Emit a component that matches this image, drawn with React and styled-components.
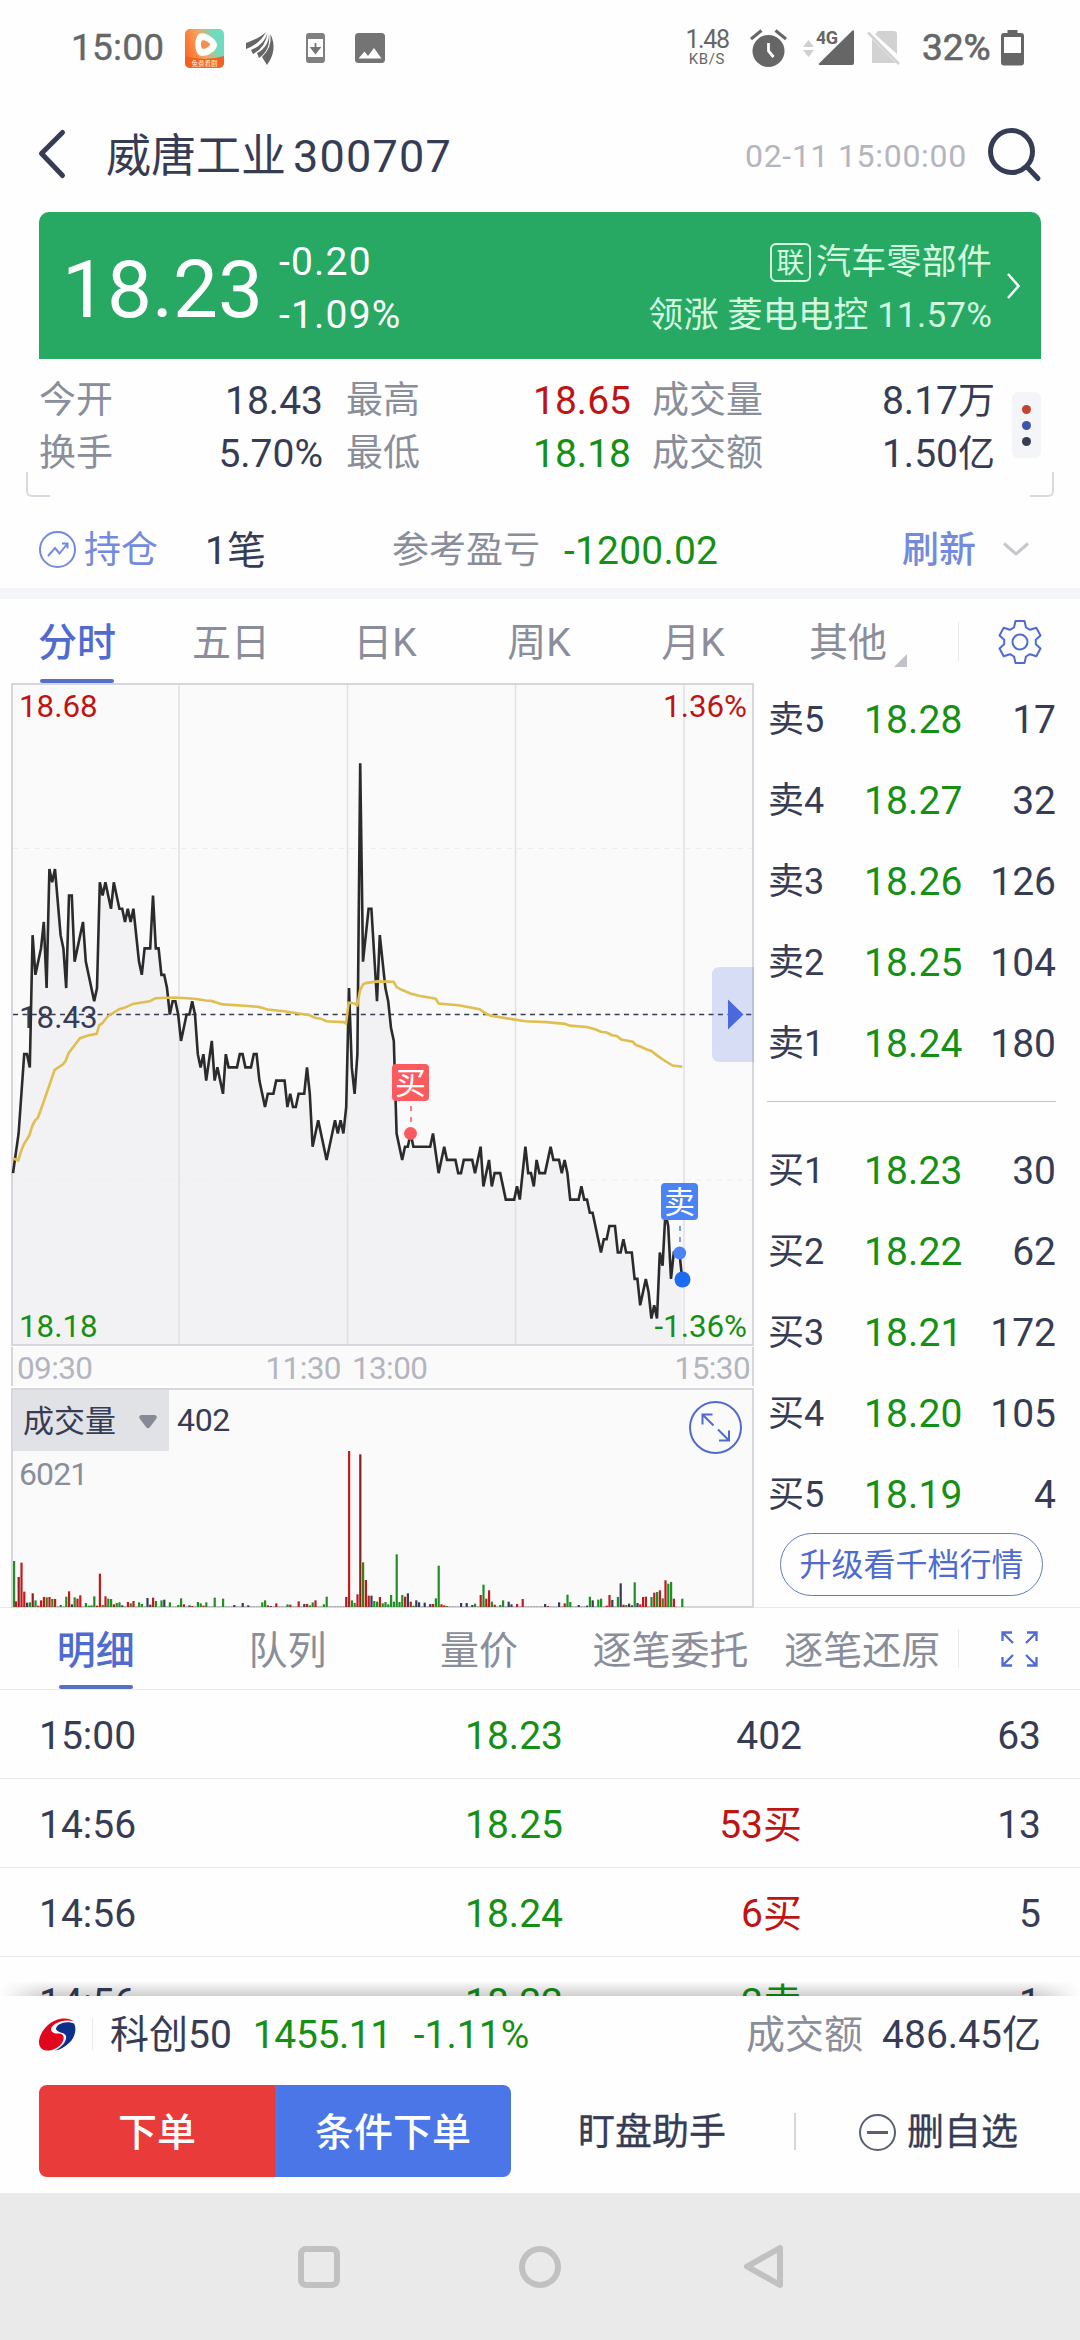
import React from 'react';
import styled, { createGlobalStyle } from 'styled-components';

const ink = '#363c54';
const gray = '#8a8e9b';
const pale = '#b3b5bf';
const blue = '#4f6bcf';
const softBlue = '#738bdc';
const red = '#c01414';
const green = '#159014';
const border = '#d6d7dc';
const hair = '#e8e9ec';
const tones = { ink, gray, red, green };

const GlobalStyle = createGlobalStyle`
    *{
        box-sizing: border-box;
    }
    body{
        margin: 0;
        background: #fefefe;
        color: ${ink};
        font-family: Roboto, "Noto Sans CJK SC", sans-serif;
        line-height: 1.2;
    }
    svg{
        display: block;
        flex: none;
        overflow: visible;
    }
`;

const Screen = styled.div`
    width: 1080px;
    height: 2340px;
    display: flex;
    flex-direction: column;
    overflow: hidden;
    white-space: nowrap;
`;

const StatusBar = styled.div`
    height: 96px;
    padding: 0 56px 0 71px;
    display: flex;
    align-items: center;
    color: #666;
`;

const StatusIcon = styled.svg`
    margin-right: ${p => p.$gap}px;
`;

const Clock = styled.span`
    width: 114px;
    font-size: 37px;
    letter-spacing: .2px;
    -webkit-text-stroke: .4px #666;
`;

const Speed = styled.div`
    width: 44px;
    margin-left: auto;
    margin-right: 21px;
    padding-bottom: 2px;
    text-align: center;
    font-size: 25px;
    line-height: 24px;
    letter-spacing: -1.4px;
    small{
        display: block;
        font-size: 15px;
        line-height: 14px;
        letter-spacing: .6px;
    }
`;

const Battery = styled.span`
    width: 79px;
    font-size: 37px;
    -webkit-text-stroke: .7px #666;
`;

const Header = styled.div`
    height: 116px;
    padding: 0 39px;
    display: flex;
    align-items: center;
`;

const Title = styled.h1`
    width: 639px;
    margin: 0 0 0 41px;
    padding-top: 6px;
    font-size: 45px;
    font-weight: 400;
    span{
        margin-left: 7px;
        letter-spacing: 1.2px;
    }
`;

const Stamp = styled.span`
    width: 243px;
    padding-top: 4px;
    font-size: 32px;
    letter-spacing: .7px;
    color: ${pale};
`;

const QuoteCard = styled.div`
    height: 147px;
    margin: 0 39px;
    padding: 0 21px 0 23px;
    display: flex;
    align-items: center;
    background: #27a963;
    border-radius: 10px 10px 0 0;
    color: #fff;
`;

const BigPrice = styled.div`
    width: 217px;
    padding-top: 9px;
    font-size: 80px;
`;

const Lines = styled.div`
    padding-top: 6px;
    display: flex;
    flex-direction: column;
    font-size: ${p => p.$size}px;
    line-height: 53px;
    letter-spacing: ${p => p.$spacing || 0}px;
    color: ${p => p.$color || 'inherit'};
    align-items: ${p => (p.$end ? 'flex-end' : 'flex-start')};
    margin-left: ${p => (p.$end ? 'auto' : 0)};
    margin-right: ${p => (p.$end ? 15 : 0)}px;
    > div{
        display: flex;
        align-items: center;
    }
`;

const LinkBadge = styled.span`
    width: 41px;
    height: 39px;
    margin-right: 5px;
    border: 2px solid #d3fbe0;
    border-radius: 6px;
    font-size: 28px;
    line-height: 37px;
    letter-spacing: 0;
    text-align: center;
`;

const Stats = styled.div`
    height: 137px;
    padding: 16px 26px 0 39px;
    display: flex;
    position: relative;
`;

const StatPair = styled.div`
    width: ${p => p.$width}px;
    margin-right: ${p => p.$gap}px;
    display: grid;
    grid-template-columns: auto 1fr;
    grid-auto-rows: 53px;
    align-items: center;
`;

const Label = styled.span`
    font-size: 37px;
    color: ${gray};
`;

const Value = styled.span`
    font-size: 39px;
    text-align: right;
    color: ${p => tones[p.$tone || 'ink']};
    small{
        font-size: 37px;
    }
`;

const More = styled.div`
    width: 29px;
    height: 66px;
    margin-top: 17px;
    display: flex;
    flex-direction: column;
    align-items: center;
    justify-content: center;
    gap: 7px;
    background: #f4f5f8;
    border-radius: 6px;
`;

const Dot = styled.i`
    width: 9px;
    height: 9px;
    border-radius: 50%;
    background: ${p => p.$color};
`;

/* corner brackets that hang over the edge of the stats block */
const Corner = styled.i`
    position: absolute;
    top: 113px;
    ${p => p.$side}: 26px;
    width: 24px;
    height: 25px;
    border: solid #d9dadf;
    border-width: ${p => (p.$side === 'left' ? '0 0 2px 2px' : '0 2px 2px 0')};
    border-radius: ${p => (p.$side === 'left' ? '0 0 0 6px' : '0 0 6px 0')};
`;

const Holding = styled.div`
    height: 92px;
    padding: 14px 39px 0;
    display: flex;
    align-items: center;
`;

const HoldText = styled.span`
    width: ${p => p.$width}px;
    margin-left: ${p => p.$left || 0}px;
    padding-top: 4px;
    font-size: ${p => p.$size || 37}px;
    font-weight: ${p => p.$weight || 400};
    letter-spacing: ${p => p.$spacing || 0}px;
    color: ${p => p.$color || ink};
`;

const Band = styled.div`
    flex: none;
    height: 11px;
    background: #f5f6f9;
`;

const Tabs = styled.div`
    flex: none;
    height: ${p => p.$height}px;
    display: flex;
    align-items: center;
    border-bottom: ${p => (p.$line ? `1px solid ${hair}` : 'none')};
`;

const Tab = styled.div`
    width: ${p => p.$width}px;
    height: 100%;
    padding-top: ${p => p.$drop}px;
    display: flex;
    justify-content: center;
    align-items: center;
    position: relative;
    font-size: 39px;
    font-weight: ${p => (p.$active ? 500 : 400)};
    color: ${p => (p.$active ? blue : gray)};
    &::after{
        content: "";
        display: ${p => (p.$active ? 'block' : 'none')};
        position: absolute;
        bottom: 0;
        width: 74px;
        height: 4px;
        border-radius: 2px;
        background: #5870c4;
    }
`;

const MoreMark = styled.i`
    position: absolute;
    right: 19px;
    bottom: 16px;
    width: 13px;
    height: 13px;
    background: #c2c3c8;
    clip-path: polygon(100% 0, 100% 100%, 0 100%);
`;

const Rule = styled.i`
    width: ${p => p.$width || 1}px;
    height: ${p => p.$height}px;
    margin: 0 ${p => p.$right || 0}px 0 ${p => p.$left || 0}px;
    background: ${p => p.$color || hair};
`;

const Market = styled.div`
    flex: none;
    height: 925px;
    display: flex;
    border-bottom: 1px solid ${hair};
`;

const Charts = styled.div`
    width: 743px;
    margin-left: 11px;
    svg text{
        font-family: Roboto, "Noto Sans CJK SC", sans-serif;
    }
`;

const PriceBox = styled.div`
    height: 663px;
    background: #fafafa;
`;

const TimeAxis = styled.div`
    height: 39px;
    margin: 1px 0 2px;
    padding: 5px 2px 0 4px;
    display: flex;
    align-items: center;
    border: solid ${border};
    border-width: 0 2px;
    background: #fafafa;
    font-size: 31.5px;
    letter-spacing: -.6px;
    color: ${pale};
    span:nth-child(2){
        margin-left: 173px;
        margin-right: 11px;
    }
    span:last-child{
        margin-left: auto;
    }
`;

const VolumeBox = styled.div`
    height: 220px;
    border: 2px solid ${border};
    background: #fafafa;
    position: relative;
`;

const VolumeHead = styled.div`
    height: 61px;
    display: flex;
    align-items: center;
    font-size: 32px;
    letter-spacing: -.3px;
`;

const Indicator = styled.div`
    width: 156px;
    height: 61px;
    margin-right: 8px;
    padding: 2px 12px 0 10px;
    display: flex;
    align-items: center;
    justify-content: space-between;
    background: #e1e2e6;
    font-size: 31px;
    letter-spacing: 0;
`;

const VolumeMax = styled.div`
    padding-left: 6px;
    font-size: 32px;
    line-height: 46px;
    letter-spacing: -.9px;
    color: ${gray};
`;

const Zoom = styled.div`
    position: absolute;
    top: 11px;
    right: 10px;
`;

const Bars = styled.div`
    position: absolute;
    left: 0;
    bottom: -1px;
`;

const Book = styled.div`
    width: 289px;
    margin: -3px 0 0 13px;
`;

const Level = styled.div`
    height: 81px;
    display: grid;
    grid-template-columns: 97px 97px 1fr;
    align-items: center;
    font-size: 39px;
    span:first-child{
        padding-left: 1px;
        font-size: 36px;
    }
    span:nth-child(2){
        color: ${green};
        letter-spacing: .1px;
    }
    span:last-child{
        text-align: right;
    }
`;

const BookRule = styled.div`
    height: 1px;
    margin: 16px 0 29px;
    background: #c3c4c9;
`;

const Upgrade = styled.div`
    width: 263px;
    height: 63px;
    margin: -3px 0 0 13px;
    border: 1px solid #5f7cc0;
    border-radius: 32px;
    font-size: 32px;
    line-height: 63px;
    text-align: center;
    color: ${blue};
`;

const Trades = styled.div`
    flex: none;
    height: 306px;
    overflow: hidden;
    position: relative;
    &::after{
        content: "";
        position: absolute;
        left: 0;
        right: 0;
        bottom: 0;
        height: 14px;
        background: linear-gradient(rgba(0, 0, 0, .02), rgba(0, 0, 0, .18));
        mask-image: linear-gradient(90deg, transparent, #000 45px, #000 1035px, transparent);
    }
`;

const Trade = styled.div`
    height: 89px;
    padding: 5px 39px 0;
    display: grid;
    grid-template-columns: 225px 299px 239px 239px;
    align-items: center;
    border-bottom: 1px solid ${hair};
    font-size: 39px;
    span{
        text-align: right;
    }
    span:first-child{
        text-align: left;
    }
    span:nth-child(2){
        color: ${green};
    }
    span:nth-child(3){
        color: ${p => tones[p.$tone]};
    }
`;

const IndexRow = styled.div`
    height: 76px;
    padding: 0 39px;
    display: flex;
    align-items: center;
    font-size: 39px;
`;

const IndexText = styled.span`
    margin-left: ${p => p.$left};
    padding-top: 2px;
    color: ${p => tones[p.$tone || 'ink']};
    letter-spacing: ${p => p.$spacing || 0}px;
`;

const Actions = styled.div`
    height: 92px;
    margin: 13px 39px 16px;
    display: flex;
    align-items: center;
    font-size: 37px;
    > svg{
        margin-top: 3px;
    }
`;

const OrderButton = styled.div`
    width: 236px;
    height: 92px;
    background: ${p => p.$bg};
    border-radius: ${p => p.$radius};
    color: #fff;
    font-size: 39px;
    font-weight: 500;
    line-height: 96px;
    text-align: center;
`;

const Action = styled.span`
    margin-left: ${p => p.$left}px;
    padding-top: 5px;
    -webkit-text-stroke: .3px ${ink};
`;

const NavBar = styled.div`
    flex: 1;
    padding: 0 297px 0 298px;
    display: flex;
    align-items: center;
    background: #eaeaea;
    svg:nth-child(2){
        margin: 0 183px 0 179px;
    }
`;

const STEP = 2.8;
const TICK = 13.22;

// [minute of the session, distance from the previous close in cents]
const PRICES = [
    [0, -12], [2, -9], [4, -3], [5, -3], [6, -4], [7, 6], [8, 3], [10, 5], [11, 7], [12, 2], [13, 11], [14, 10],
    [15, 11], [17, 6], [18, 5], [19, 2], [20, 9], [21, 9], [22, 4], [25, 7], [26, 4], [29, 1], [30, 2], [31, 10],
    [32, 9], [33, 10], [35, 8], [36, 10], [38, 8], [39, 8], [40, 7], [41, 8], [42, 7], [43, 8], [45, 4], [46, 3],
    [47, 5], [49, 5], [50, 9], [51, 5], [52, 5], [53, 3], [54, 3], [55, 2], [56, 0], [57, 1], [58, 1], [59, 0],
    [60, -2], [62, 0], [63, 0], [64, 1], [65, 0], [66, -3], [67, -4], [68, -3], [69, -5], [71, -2], [72, -5],
    [73, -4], [75, -6], [76, -3], [77, -4], [80, -4], [81, -3], [82, -3], [83, -4], [85, -4], [86, -3], [87, -3],
    [88, -5], [90, -7], [91, -6], [93, -6], [94, -5], [97, -5], [98, -7], [99, -6], [100, -7], [101, -7],
    [102, -6], [104, -6], [105, -4], [106, -6], [107, -10], [109, -8], [112, -11], [115, -8], [116, -9],
    [117, -8], [118, -9], [119, -7], [120, 2], [121, -4], [122, -6], [123, -3], [124, 19], [125, 4], [127, 8],
    [128, 8], [130, 1], [131, 6], [133, 2], [134, 1], [135, -1], [136, -2], [137, -9], [139, -11], [140, -10],
    [141, -10], [142, -9], [143, -10], [149, -10], [150, -9], [152, -12], [154, -10], [155, -11], [158, -11],
    [159, -12], [160, -12], [161, -11], [164, -11], [165, -12], [167, -10], [168, -13], [170, -11], [171, -13],
    [172, -12], [174, -12], [176, -14], [179, -14], [180, -13], [181, -14], [183, -10], [184, -12], [185, -12],
    [186, -13], [187, -11], [188, -12], [190, -12], [192, -10], [193, -11], [195, -11], [196, -12], [197, -11],
    [198, -12], [199, -14], [202, -14], [203, -13], [204, -14], [205, -14], [206, -15], [207, -15], [210, -18],
    [211, -17], [212, -17], [213, -16], [215, -16], [216, -18], [217, -18], [218, -17], [219, -18], [221, -18],
    [222, -20], [223, -20], [224, -22], [226, -20], [227, -21], [228, -23], [229, -22], [230, -23], [231, -18],
    [232, -19], [233, -15], [234, -16], [235, -20], [236, -18], [238, -18], [239, -20],
];

// average price, on a finer grid than the price line
const AVERAGE = [
    [38, 1103], [55, 1108], [63, 1087], [72, 1070], [88, 1050], [97, 1028], [105, 1016], [114, 1009], [130, 975],
    [164, 899], [189, 886], [197, 878], [206, 860], [222, 844], [240, 826], [264, 820], [290, 816], [298, 796],
    [306, 792], [323, 776], [357, 759], [373, 756], [399, 747], [415, 745], [449, 741], [466, 734], [525, 732],
    [584, 735], [617, 739], [634, 740], [668, 748], [735, 751], [778, 754], [803, 760], [853, 764], [895, 769],
    [929, 773], [945, 779], [962, 781], [979, 787], [1030, 789], [1038, 792], [1046, 744], [1063, 746],
    [1072, 750], [1080, 716], [1089, 702], [1097, 699], [1133, 695], [1181, 696], [1190, 708], [1207, 715],
    [1231, 723], [1257, 728], [1307, 735], [1316, 746], [1375, 750], [1439, 759], [1455, 768], [1472, 774],
    [1535, 782], [1577, 787], [1640, 789], [1695, 793], [1710, 797], [1761, 800], [1787, 806], [1802, 811],
    [1820, 813], [1836, 819], [1850, 821], [1864, 829], [1898, 834], [1906, 841], [1926, 847], [1940, 852],
    [1953, 855], [1970, 865], [1994, 878], [2018, 889], [2047, 892],
];

// minute, colour, height
const VOLUMES = `0g138 1r17 2d90 3r133 4r46 5n13 6g14 7d41 8g20 9r4 10r20 11r30 12o29 13r30 14g24 15r24 17g6 19g31
20r47 21n8 22g29 23r25 24r35 26g12 27g4 28g5 29g32 30r4 31r100 32g6 33r32 34g25 35g24 36r8 37g12 38g14 39n5
41r15 42g11 43r18 45g14 46g9 48n27 49n7 50r28 51g18 53g20 54n22 56g14 59g6 60g26 61r8 63n5 64r3 66g15 67g11
68r4 69g14 72g28 75g25 79n6 82n12 84n5 89g14 90g20 91r5 92n3 94r11 98g8 99r7 102r17 104n9 105r9 106g5 107g14
108r20 111g8 112g31 119d30 120r468 121g20 122g12 123r38 124d458 125o134 126r81 127r34 128n34 129g18 130g16
131r30 132g11 133g15 134g8 135g36 136g16 137g158 138g15 139g36 140r31 141n41 142r16 143g4 144n20 145n14
147n13 149n9 150r9 151g26 152g124 153r8 154r5 155g3 160n12 162n12 164n6 165g10 167r36 168g67 169r25 170r50
171g16 172r7 174g6 175g20 177n16 178n8 180r9 182r24 190n9 191r3 195n14 197r11 198g37 199g15 202n6 205n4
206g31 207n20 209g22 210g25 212r4 213r36 214n21 216g30 217n71 218r7 219g6 220n10 221n5 222g74 223n12 224r8
225r30 226r31 228g30 229r43 230g45 231r50 232o26 233r80 234g70 235g75 236r25 239g25`
    .split(/\s+/)
    .map(item => item.match(/(\d+)([a-z])(\d+)/))
    .map(([, minute, tone, height]) => ({ minute: Number(minute), tone, height: height / 3 }));

const barColors = { g: '#1f8f24', r: '#c21a1c', d: '#8f1d20', n: ink, o: '#3f7d12' };

const ASKS = [['卖5', '18.28', 17], ['卖4', '18.27', 32], ['卖3', '18.26', 126], ['卖2', '18.25', 104], ['卖1', '18.24', 180]];
const BIDS = [['买1', '18.23', 30], ['买2', '18.22', 62], ['买3', '18.21', 172], ['买4', '18.20', 105], ['买5', '18.19', 4]];

const TRADES = [
    ['15:00', '18.23', '402', '63', 'ink'],
    ['14:56', '18.25', '53买', '13', 'red'],
    ['14:56', '18.24', '6买', '5', 'red'],
    ['14:56', '18.22', '2卖', '1', 'green'],
];

const PhoneStatus = () => (
    <StatusBar>
        <Clock>15:00</Clock>
        <StatusIcon $gap={22} width="39" height="39" viewBox="0 0 39 39">
            <defs>
                <linearGradient id="app" x1="0" y1=".6" x2="1" y2=".3">
                    <stop offset="0" stopColor="#ff6a26" />
                    <stop offset=".45" stopColor="#f3a661" />
                    <stop offset=".8" stopColor="#6fdcc0" />
                </linearGradient>
            </defs>
            <rect width="39" height="39" rx="5" fill="url(#app)" />
            <path d="M0 27q19 6 39 0v7a5 5 0 0 1-5 5H5a5 5 0 0 1-5-5z" fill="#f4601f" />
            <path d="M14 5c-5 4-5 17 0 21 6 4 18-4 18-10S19 2 14 5z" fill="#fff" />
            <path d="M17 11.500c-1.500 2-1.500 6 0 8 2 1.500 8-2 8-4s-6-5.500-8-4z" fill="#f0914f" />
            <text x="19.500" y="36.500" fontSize="6.500" textAnchor="middle" fill="#fff3d8">免费看剧</text>
        </StatusIcon>
        <StatusIcon $gap={32} width="28" height="33" viewBox="0 0 28 33" fill="#666">
            <path d="M20 0Q14 6 0 11v6Q14 12 20 0z" />
            <path d="M21.500 1Q18 13 5 18l2 4Q20 15 21.500 1z" />
            <path d="M23 1.500Q23 15 11 21l2 5Q25 18 23 1.500z" />
            <path d="M24.500 2Q26 16 16 25l5 8Q32 18 24.500 2z" />
        </StatusIcon>
        <StatusIcon $gap={30} width="19" height="30" viewBox="0 0 19 30">
            <path d="M3 0h13a3 3 0 0 1 3 3v24a3 3 0 0 1-3 3H3a3 3 0 0 1-3-3V3a3 3 0 0 1 3-3zM2 6v18h15V6z" fill="#808080" fillRule="evenodd" />
            <path d="M9.500 10v8M5.500 15l4 5 4-5z" stroke="#757575" strokeWidth="1.800" fill="#757575" />
        </StatusIcon>
        <svg width="30" height="30" viewBox="0 0 30 30">
            <rect width="30" height="30" rx="3.500" fill="#747474" />
            <path d="M3.500 25.500l6-7 3.500 4.500 6-8 7.500 10.500z" fill="#fff" />
        </svg>
        <Speed>1.48<small>KB/S</small></Speed>
        <StatusIcon $gap={16} width="37" height="38" viewBox="0 0 37 38">
            <circle cx="18.500" cy="22" r="16" fill="#666" />
            <path d="M1 10L11.500 1.500M36 10L25.500 1.500" stroke="#666" strokeWidth="3" />
            <path d="M18.500 14v8l5 6" stroke="#fff" strokeWidth="2.800" fill="none" />
        </StatusIcon>
        <StatusIcon $gap={2} width="11" height="17" viewBox="0 0 11 17" fill="#cfcfcf">
            <path d="M0 7L5.500 0 11 7zM0 10h11l-5.500 7z" />
        </StatusIcon>
        <StatusIcon $gap={14} width="38" height="36" viewBox="0 0 38 36">
            <path d="M38 1v32a2 2 0 0 1-2 2H3.500a1 1 0 0 1-.5-1.500L36.500.5q1.500-.8 1.500.5z" fill="#666" />
            <text x="0" y="14" fontSize="18" fontWeight="700" fill="#666" stroke="#fefefe" strokeWidth="3" paintOrder="stroke" textLength="22">4G</text>
        </StatusIcon>
        <StatusIcon $gap={22} width="32" height="34" viewBox="0 0 32 34">
            <path d="M4 8l24 24H4zM10 0h16a3 3 0 0 1 3 3v20L7 3.500z" fill="#d2d2d2" />
            <path d="M0 1.500L31 33" stroke="#d2d2d2" strokeWidth="2.500" />
            <path d="M2.500 0L32 29.500" stroke="#fefefe" strokeWidth="2" />
        </StatusIcon>
        <Battery>32%</Battery>
        <svg width="23" height="36" viewBox="0 0 23 36">
            <path d="M6.500 0h10v3H20a3 3 0 0 1 3 3v26.500a3 3 0 0 1-3 3H3a3 3 0 0 1-3-3V6a3 3 0 0 1 3-3h3.500zM3 7v16h17V7z" fill="#666" fillRule="evenodd" />
        </svg>
    </StatusBar>
);

const x = minute => 2 + minute * STEP;
const y = cents => 331.500 - cents * TICK;

const PriceChart = () => {
    const line = PRICES.map(([m, c]) => `${x(m)},${y(c)}`).join(' ');
    const average = AVERAGE.map(([px, py]) => `${px / 3 - 11},${py / 2.306 - 3}`).join(' ');
    return (
        <PriceBox>
            <svg width="743" height="663" viewBox="0 0 743 663" fill="none">
                <polygon points={`2,662 ${line} ${x(239)},662`} fill="#f2f2f4" />
                {[168, 336.500, 504.500, 673].map(gx => (
                    <path key={gx} d={`M${gx} 1V662`} stroke="#dfe0e3" strokeWidth="1.500" />
                ))}
                <path d="M2 165.500H741M2 497H741" stroke="#eeeeef" strokeDasharray="6 4.500" />
                <rect x="1" y="1" width="741" height="661" stroke={border} strokeWidth="2" />
                <path d="M2 331.500H741" stroke={ink} strokeWidth="1.300" strokeDasharray="5 4.400" />
                <g fontSize="31.300">
                    <text x="8" y="34" fill={red}>18.68</text>
                    <text x="8" y="345" fill={ink}>18.43</text>
                    <text x="8" y="654" fill={green}>18.18</text>
                    <text x="736" y="34" fill={red} textAnchor="end">1.36%</text>
                </g>
                <polyline points={line} stroke="#2b2b2b" strokeWidth="2.600" />
                <text x="736" y="654" fontSize="31.300" fill={green} textAnchor="end">-1.36%</text>
                <polyline points={average} stroke="#e0be4f" strokeWidth="2.600" />
                <path d="M400 423v20" stroke="#fb5b5e" strokeWidth="1.500" strokeDasharray="5 6" />
                <circle cx="399.500" cy="450.500" r="6.500" fill="#fb5b5e" />
                <rect x="381" y="381" width="37" height="37" rx="4" fill="#fb5b5e" />
                <text x="399.500" y="411" fontSize="31" fill="#fff" textAnchor="middle">买</text>
                <path d="M669 543v20" stroke="#4b83f6" strokeWidth="1.500" strokeDasharray="5 6" />
                <circle cx="668.700" cy="570" r="6.500" fill="#4b83f6" />
                <circle cx="671.500" cy="596.500" r="8" fill="#1b6cf2" />
                <rect x="650" y="500" width="37" height="37" rx="4" fill="#4b83f6" />
                <text x="668.500" y="530" fontSize="31" fill="#fff" textAnchor="middle">卖</text>
                <path d="M743 284H709q-8 0-8 8v79q0 8 8 8H743z" fill="#4869e0" fillOpacity=".2" />
                <path d="M717 316.500v30l15.500-15z" fill="#4a69dc" />
            </svg>
        </PriceBox>
    );
};

const VolumeChart = () => (
    <VolumeBox>
        <VolumeHead>
            <Indicator>
                成交量
                <svg width="18" height="14" viewBox="0 0 18 14">
                    <path d="M2 0h14q3 1 1 4l-6 8q-2 2.500-4 0L1 4Q-1 1 2 0z" fill="#868a97" />
                </svg>
            </Indicator>
            402
        </VolumeHead>
        <VolumeMax>6021</VolumeMax>
        <Bars>
            <svg width="741" height="160" viewBox="0 0 741 160">
                <path d="M2 159.500H664" stroke="#9a9ca3" strokeWidth="1" strokeDasharray="2 .8" opacity=".7" />
                {VOLUMES.map(bar => (
                    <rect
                        key={bar.minute}
                        x={Math.max(0, bar.minute * STEP - 1)}
                        y={160 - bar.height}
                        width="2.200"
                        height={bar.height}
                        fill={barColors[bar.tone]}
                    />
                ))}
            </svg>
        </Bars>
        <Zoom>
            <svg width="53" height="53" viewBox="0 0 53 53" fill="none" stroke={blue} strokeWidth="2">
                <circle cx="26.500" cy="26.500" r="25.500" />
                <path d="M24.500 24.500L13.500 13.500M13.500 23.500V13.500H23.500M29 28.500L40 39.500M40 29.500V39.500H30" />
            </svg>
        </Zoom>
    </VolumeBox>
);

const Levels = ({ rows }) => rows.map(([name, price, count]) => (
    <Level key={name}>
        <span>{name}</span>
        <span>{price}</span>
        <span>{count}</span>
    </Level>
));

const App = () => {
    return (
        <Screen>
            <GlobalStyle />
            <PhoneStatus />
            <Header>
                <svg width="26" height="48" viewBox="0 0 26 48" fill="none" stroke={ink} strokeWidth="5" strokeLinecap="round" strokeLinejoin="round">
                    <path d="M23.500 2.500L2.500 23.500 23.500 45.500" />
                </svg>
                <Title>威唐工业<span>300707</span></Title>
                <Stamp>02-11 15:00:00</Stamp>
                <svg width="53" height="53" viewBox="0 0 53 53" fill="none" stroke={ink} strokeWidth="5" strokeLinecap="round">
                    <circle cx="23.500" cy="23.500" r="21" />
                    <path d="M40 40l10 10.500" />
                </svg>
            </Header>
            <QuoteCard>
                <BigPrice>18.23</BigPrice>
                <Lines $size={39} $spacing={1.2}>
                    <span>-0.20</span>
                    <span>-1.09%</span>
                </Lines>
                <Lines $size={35} $spacing={.2} $color="#d3fbe0" $end>
                    <div><LinkBadge>联</LinkBadge>汽车零部件</div>
                    <span>领涨 菱电电控 11.57%</span>
                </Lines>
                <svg width="13" height="26" viewBox="0 0 13 26" fill="none" stroke="#fff" strokeWidth="2.500">
                    <path d="M1 1l10.500 12L1 25" />
                </svg>
            </QuoteCard>
            <Stats>
                <StatPair $width={284} $gap={23}>
                    <Label>今开</Label><Value>18.43</Value>
                    <Label>换手</Label><Value>5.70%</Value>
                </StatPair>
                <StatPair $width={285} $gap={21}>
                    <Label>最高</Label><Value $tone="red">18.65</Value>
                    <Label>最低</Label><Value $tone="green">18.18</Value>
                </StatPair>
                <StatPair $width={343} $gap={17}>
                    <Label>成交量</Label><Value>8.17<small>万</small></Value>
                    <Label>成交额</Label><Value>1.50<small>亿</small></Value>
                </StatPair>
                <More>
                    <Dot $color="#c3432f" />
                    <Dot $color="#3c53ae" />
                    <Dot $color={ink} />
                </More>
                <Corner $side="left" />
                <Corner $side="right" />
            </Stats>
            <Holding>
                <svg width="37" height="37" viewBox="0 0 37 37" fill="none" stroke={softBlue} strokeWidth="2">
                    <circle cx="18.500" cy="18.500" r="17.500" />
                    <path d="M9 25l7-8 4.500 5.500 8-10M23 12.500h5.500v5" />
                </svg>
                <HoldText $width={121} $left={8} $color={softBlue}>持仓</HoldText>
                <HoldText $width={187} $size={39}>1笔</HoldText>
                <HoldText $width={172} $color={gray}>参考盈亏</HoldText>
                <HoldText $width={338} $size={39} $spacing={.2} $color={green}>-1200.02</HoldText>
                <HoldText $width={101} $weight={500} $color={softBlue}>刷新</HoldText>
                <svg width="26" height="14" viewBox="0 0 26 14" fill="none" stroke="#c6c7cd" strokeWidth="3">
                    <path d="M1 1.500l12 10.500L25 1.500" />
                </svg>
            </Holding>
            <Band />
            <Tabs $height={84}>
                {['分时', '五日', '日K', '周K', '月K', '其他'].map((name, i) => (
                    <Tab key={name} $width={i === 5 ? 156 : 154} $drop={4} $active={i === 0}>
                        {name}
                        {i === 5 && <MoreMark />}
                    </Tab>
                ))}
                <Rule $height={39} $left={32} $right={40} />
                <svg width="42" height="43" viewBox="0 0 42 43" fill="none" stroke={blue} strokeWidth="2" strokeLinejoin="round">
                    <path d="M16.500 1h9l1.500 6.500 4 2.300 6.300-2 4.200 7.700-4.700 4.200v4.600l4.700 4.200-4.200 7.700-6.300-2-4 2.300-1.500 6.500h-9L15 36.500l-4-2.300-6.300 2L.5 28.500l4.700-4.200v-4.600L.5 15.500l4.200-7.700 6.300 2 4-2.300z" />
                    <circle cx="21" cy="22" r="7.500" />
                </svg>
            </Tabs>
            <Market>
                <Charts>
                    <PriceChart />
                    <TimeAxis>
                        <span>09:30</span>
                        <span>11:30</span>
                        <span>13:00</span>
                        <span>15:30</span>
                    </TimeAxis>
                    <VolumeChart />
                </Charts>
                <Book>
                    <Levels rows={ASKS} />
                    <BookRule />
                    <Levels rows={BIDS} />
                    <Upgrade>升级看千档行情</Upgrade>
                </Book>
            </Market>
            <Tabs $height={82} $line>
                {['明细', '队列', '量价', '逐笔委托', '逐笔还原'].map((name, i) => (
                    <Tab key={name} $width={191.6} $drop={6} $active={i === 0}>{name}</Tab>
                ))}
                <Rule $height={39} $right={42} />
                <svg width="37" height="36" viewBox="0 0 37 36" fill="none" stroke={blue} strokeWidth="2.300">
                    <path d="M12 12L1.500 1.500M1.500 10V1.500H11M25 12L35.500 1.500M35.500 10V1.500H26M12 24L1.500 34.500M1.500 26v8.500H11M25 24l10.500 10.500M35.500 26v8.500H26" />
                </svg>
            </Tabs>
            <Trades>
                {TRADES.map(([time, price, count, orders, tone], i) => (
                    <Trade key={i} $tone={tone}>
                        <span>{time}</span>
                        <span>{price}</span>
                        <span>{count}</span>
                        <span>{orders}</span>
                    </Trade>
                ))}
            </Trades>
            <IndexRow>
                <svg width="37" height="33" viewBox="0 0 37 33">
                    <path d="M35 3.500C28-2 16 0 8 8-1 17-2 27 3 31c6 4 16 0 20-6 3-5 2-9.500-3-9.500-5 .5-8-1.500-8-4.500C13 6 24 0 35 3.500z" fill="#e0061b" />
                    <path d="M35 5.500c3 5 1 14.500-5 19.500-4 4-9 7-14 7.500C23 29 28 23 27 18c-1-4-9-3-10-7C17 6 27 2 35 5.500z" fill="#0d2f8c" />
                </svg>
                <Rule $height={32} $left={16} />
                <IndexText $left="17px">科创50</IndexText>
                <IndexText $left="21px" $tone="green" $spacing={-.4}>1455.11</IndexText>
                <IndexText $left="22px" $tone="green">-1.11%</IndexText>
                <IndexText $left="auto" $tone="gray">成交额</IndexText>
                <IndexText $left="19px">486.45亿</IndexText>
            </IndexRow>
            <Actions>
                <OrderButton $bg="#e83b3a" $radius="8px 0 0 8px">下单</OrderButton>
                <OrderButton $bg="#4a76e8" $radius="0 8px 8px 0">条件下单</OrderButton>
                <Action $left={67}>盯盘助手</Action>
                <Rule $width={2} $height={37} $color="#d5d6db" $left={68} $right={63} />
                <svg width="37" height="37" viewBox="0 0 37 37" fill="none" stroke="#5a5f73" strokeWidth="2">
                    <circle cx="18.500" cy="18.500" r="17.500" />
                    <path d="M8 18.500h21" strokeWidth="3" />
                </svg>
                <Action $left={11}>删自选</Action>
            </Actions>
            <NavBar>
                <svg width="42" height="42" viewBox="0 0 42 42" fill="none" stroke="#c1c1c1" strokeWidth="6">
                    <rect x="3" y="3" width="36" height="36" rx="5" />
                </svg>
                <svg width="42" height="42" viewBox="0 0 42 42" fill="none" stroke="#c1c1c1" strokeWidth="6">
                    <circle cx="21" cy="21" r="18" />
                </svg>
                <svg width="40" height="43" viewBox="0 0 40 43" fill="none" stroke="#c1c1c1" strokeWidth="6" strokeLinejoin="round">
                    <path d="M3 21.500L36 3v37z" />
                </svg>
            </NavBar>
        </Screen>
    );
};

export default App;
